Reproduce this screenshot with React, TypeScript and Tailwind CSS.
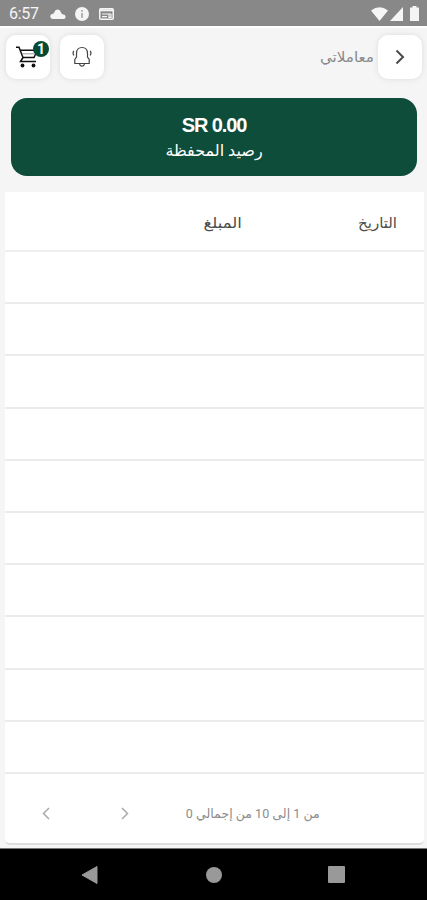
import React from "react";

const rows = Array.from({ length: 10 }, (_, i) => i);

function StatusBar() {
  return (
    <div
      dir="ltr"
      className="h-[26px] shrink-0 bg-[#888888] flex items-center justify-between pl-[9px] pr-[7px] pt-px text-[#f5f5f5]"
    >
      <div className="flex items-center">
        <span className="w-[30px] text-[16px] leading-none tracking-[-0.3px]">6:57</span>
        <svg width="16" height="10" viewBox="0 0 16 10" fill="currentColor" className="ml-[11px]">
          <path d="M2.500 10a2.500 2.500 0 0 1-.4-4.900Q4 4.800 4.500 3C6-.3 10-.3 11 3.800q.5 1.400 2 1.600A2.300 2.300 0 0 1 13.500 10z" />
        </svg>
        <svg width="14" height="14" viewBox="0 0 14 14" className="ml-[9px]">
          <circle cx="7" cy="7" r="7" fill="currentColor" />
          <path d="M7 3v1.8M7 6v5" stroke="#888888" strokeWidth="1.2" />
        </svg>
        <svg width="15" height="12" viewBox="0 0 15 12" className="ml-[10px]">
          <rect x=".75" y=".75" width="13.5" height="10.5" rx="1" fill="none" stroke="currentColor" strokeWidth="1.5" />
          <path d="M1 2.300h13" stroke="currentColor" strokeWidth="2" />
          <path d="M3 6h9M3 8.700h5M10 6v3.300h2V6" fill="none" stroke="currentColor" strokeWidth="1.200" />
        </svg>
      </div>
      <div className="flex items-center">
        <svg width="17" height="14" viewBox="0 0 17 14" fill="currentColor">
          <path d="M0 3.500Q8.500-3 17 3.500L8.500 14z" />
        </svg>
        <svg width="13" height="14" viewBox="0 0 13 14" fill="currentColor" className="ml-[2px]">
          <path d="M13 0v14H0z" />
        </svg>
        <svg width="9" height="15" viewBox="0 0 9 15" fill="currentColor" className="ml-[7px] mr-px">
          <path d="M2.500 1.500V0h4v1.500H9V15H0V1.500z" />
        </svg>
      </div>
    </div>
  );
}

function Header() {
  return (
    <header className="h-[72px] shrink-0 border-t-2 border-white flex items-start justify-between pt-[7px] pr-[5px] pl-[6px]">
      <div className="flex items-center gap-[5px]">
        <button className="size-[44px] -ml-px rounded-[10px] bg-white shadow-[0_0_6px_rgba(0,0,0,0.1)] flex items-center justify-center">
          <svg width="10" height="16" viewBox="0 0 10 16" fill="none" stroke="#4a4a4a" strokeWidth="2">
            <path d="M1.500 1.500L8 8l-6.500 6.500" />
          </svg>
        </button>
        <span className="w-[54px] whitespace-nowrap text-[14px] text-[#888888]">
          <span className="inline-block origin-right scale-x-[1.08]">معاملاتي</span>
        </span>
      </div>
      <div className="flex items-center gap-[10px]">
        <button className="size-[44px] rounded-[10px] bg-white shadow-[0_0_6px_rgba(0,0,0,0.1)] flex items-center justify-center">
          <svg width="20" height="22" viewBox="0 0 20 22" fill="none" stroke="#444" strokeWidth="1.200">
            <path d="M4.500 11V7.500C4.500 3.500 7 1.500 10 1.500s5.500 2 5.500 6V11l1.700 2.500v4H2.800v-4z" />
            <path d="M7.500 17.500q.5 2.700 2.500 2.700t2.500-2.700" />
            <path d="M1.800 4.800Q.3 7 1.800 9.500M18.200 4.800q1.500 2.200 0 4.700" />
          </svg>
        </button>
        <button className="relative size-[44px] rounded-[10px] bg-white shadow-[0_0_6px_rgba(0,0,0,0.1)] flex items-center justify-center">
          <svg width="24" height="22" viewBox="0 0 24 22" fill="none" stroke="#111" strokeWidth="1.500" className="-ml-[2px]">
            <path d="M1 1.200h3L8 11.500h11L22 5M5.500 4.200h14" />
            <path d="M7 7.800h12" stroke="#999" strokeWidth="1" />
            <path d="M8 11.500l-2.500 4H21" />
            <circle cx="7.500" cy="19.500" r="1.900" fill="#111" stroke="none" />
            <circle cx="18.500" cy="19.500" r="1.900" fill="#111" stroke="none" />
          </svg>
          <span className="absolute right-px top-[6px] size-4 rounded-full bg-[#064a35] text-white text-[14px] font-bold leading-4 text-center">
            1
          </span>
        </button>
      </div>
    </header>
  );
}

function Balance() {
  return (
    <section className="mr-[10px] ml-[11px] h-[78px] shrink-0 rounded-[16px] bg-[#0e4d3a] text-white flex flex-col items-center pt-[15px]">
      <div dir="ltr" className="font-['Liberation_Sans'] text-[20px] leading-6 font-bold tracking-[-1.1px]">
        SR 0.00
      </div>
      <div className="text-[16px] leading-[28px] font-medium whitespace-nowrap">رصيد المحفظة</div>
    </section>
  );
}

function Transactions() {
  return (
    <section className="mt-4 ml-[5px] mr-[3px] h-[653px] shrink-0 bg-white rounded-b-[5px] border-b-2 border-[#dddddd] flex flex-col">
      <div className="h-[60px] shrink-0 border-b-2 border-[#eeeeee] flex items-center text-[15px] text-[#4d4d4d] pr-[27px] pt-1">
        <div className="w-[155px] whitespace-nowrap">التاريخ</div>
        <div className="whitespace-nowrap origin-right scale-x-[1.1]">المبلغ</div>
      </div>
      <div className="h-[522px] shrink-0 grid grid-rows-10">
        {rows.map((row) => (
          <div key={row} className="border-b-2 border-[#ebebeb]" />
        ))}
      </div>
      <footer className="flex-1 flex items-center pr-[104px] pt-[10px] text-[13px] text-[#8c8c8c]">
        <div className="w-[134px] whitespace-nowrap">
          <span className="inline-block origin-right scale-x-[0.965]">من 1 إلى 10 من إجمالي 0</span>
        </div>
        <div dir="ltr" className="w-[87px] mr-[57px] flex justify-between">
          <svg width="8" height="13" viewBox="0 0 8 13" fill="none" stroke="#aaaaaa" strokeWidth="1.500">
            <path d="M7 1L1.500 6.500 7 12" />
          </svg>
          <svg width="8" height="13" viewBox="0 0 8 13" fill="none" stroke="#aaaaaa" strokeWidth="1.500">
            <path d="M1 1l5.500 5.500L1 12" />
          </svg>
        </div>
      </footer>
    </section>
  );
}

function NavigationBar() {
  return (
    <nav dir="ltr" className="mt-auto h-[52px] shrink-0 border-t border-[#777] bg-black flex items-center pl-[81px]">
      <svg width="17" height="18" viewBox="0 0 17 18" fill="#999">
        <path d="M16 0.500v17L1 9z" stroke="#999" strokeLinejoin="round" />
      </svg>
      <span className="ml-[108px] size-4 rounded-full bg-[#999]" />
      <span className="ml-[106px] size-[17px] rounded-[1px] bg-[#999]" />
    </nav>
  );
}

function App() {
  return (
    <div
      dir="rtl"
      className="w-[427px] h-[900px] overflow-hidden bg-[#f5f5f5] flex flex-col font-[Roboto,'DejaVu_Sans',sans-serif]"
    >
      <StatusBar />
      <Header />
      <Balance />
      <Transactions />
      <NavigationBar />
    </div>
  );
}

export default App;
